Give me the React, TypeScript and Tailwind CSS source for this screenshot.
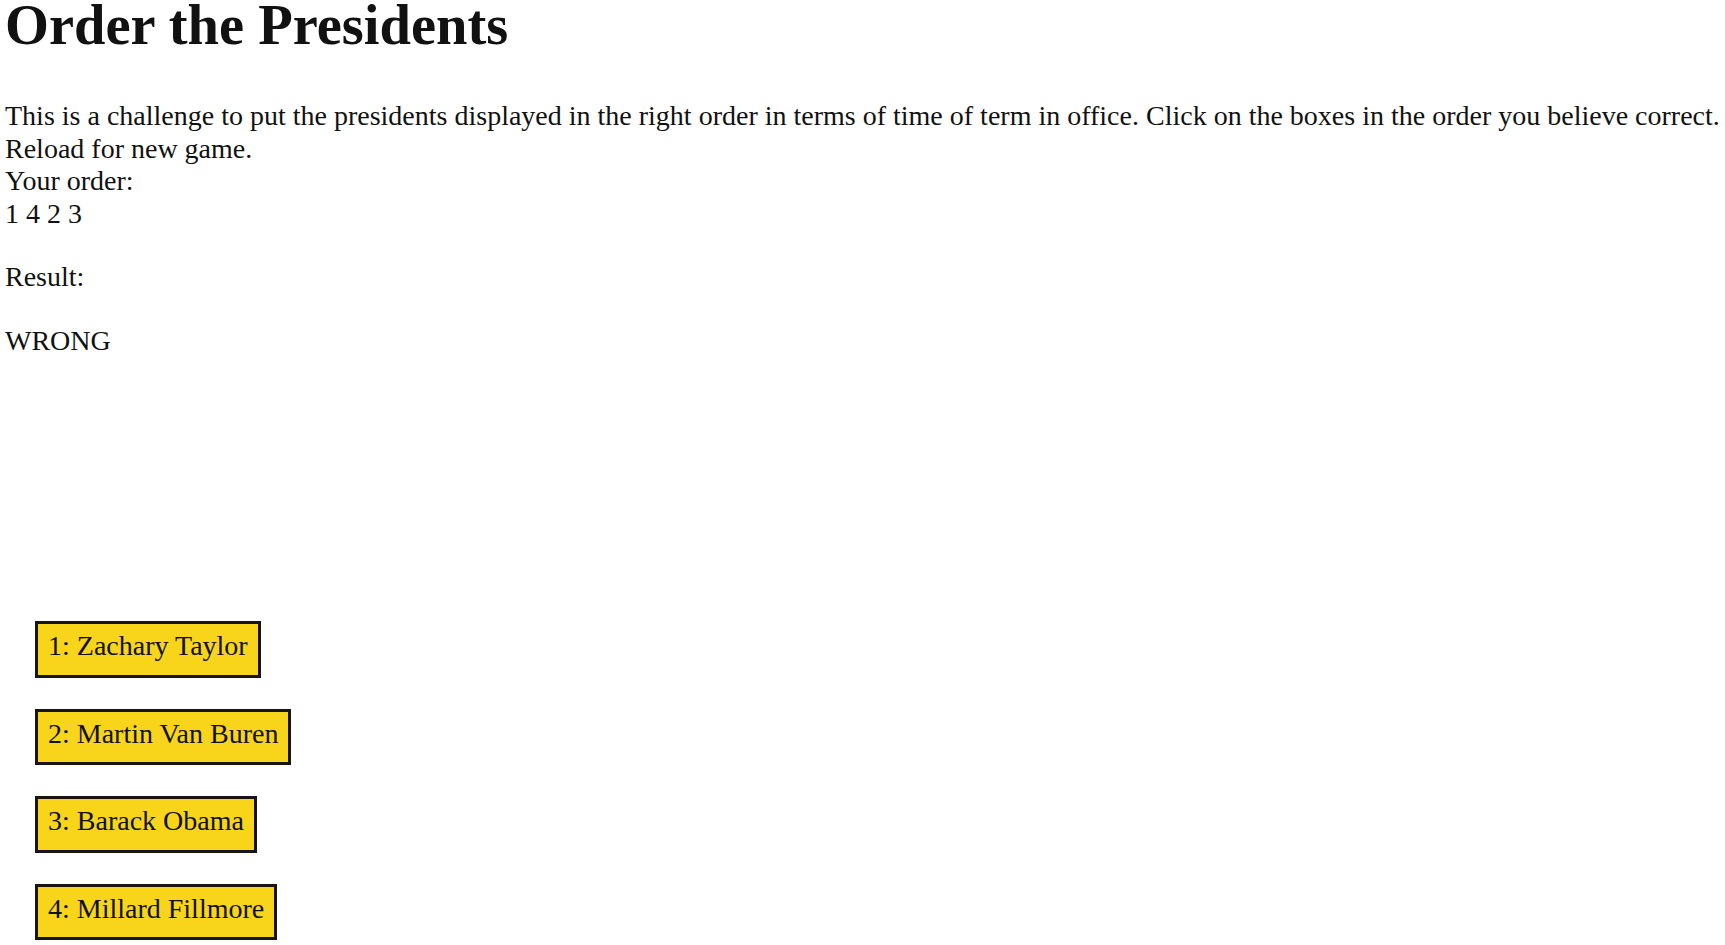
const presidents = [
  "1: Zachary Taylor",
  "2: Martin Van Buren",
  "3: Barack Obama",
  "4: Millard Fillmore",
];

export default function App() {
  return (
    <div className="min-h-screen bg-white pl-[5px] pt-[2px] text-[#111] font-['Liberation_Serif','Times_New_Roman',serif]">
      <h1 className="text-[56.5px] font-bold leading-[46px]">Order the Presidents</h1>

      <p className="mt-[52px] text-[28px] leading-[32.5px]">
        This is a challenge to put the presidents displayed in the right order in terms of time of term in office. Click on the boxes in the order you believe correct.
        <br />
        Reload for new game.
        <br />
        Your order:
        <br />
        1 4 2 3
      </p>
      <p className="mt-[31px] text-[28px] leading-[32.5px]">Result:</p>
      <p className="mt-[31px] text-[28px] leading-[32.5px]">WRONG</p>

      <div className="mt-[264px] flex flex-col items-start gap-[31px] pl-[30px]">
        {presidents.map((name) => (
          <div
            key={name}
            className="border-[3px] border-[#151515] bg-[#f8d51b] px-[10px] pt-[6px] pb-[12px] text-[28px] leading-[32.5px]"
          >
            {name}
          </div>
        ))}
      </div>
    </div>
  );
}
